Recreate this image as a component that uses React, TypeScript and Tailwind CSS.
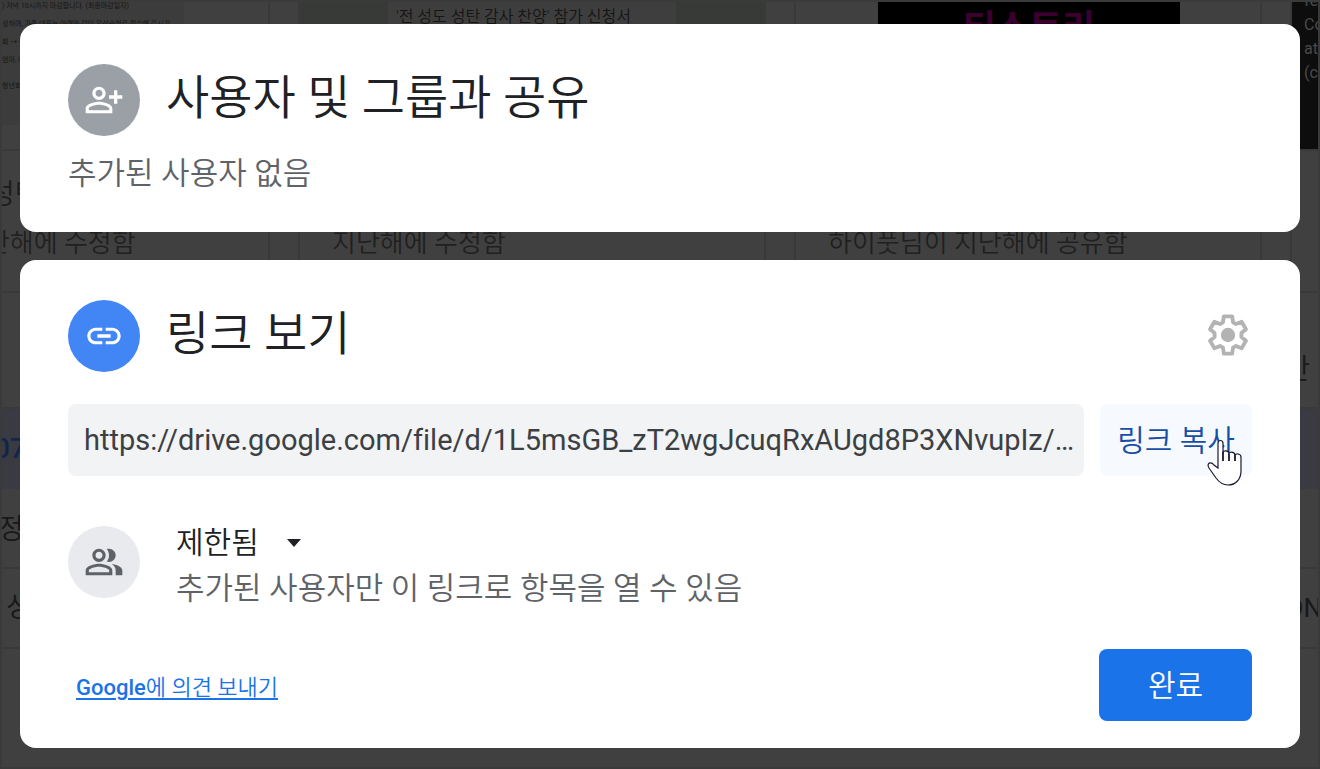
import type { ReactNode } from 'react';

const headPath =
  'M9 5.9c1.16 0 2.1.94 2.1 2.1s-.94 2.1-2.1 2.1S6.9 9.16 6.9 8 7.84 5.9 9 5.9M9 4C6.79 4 5 5.79 5 8s1.79 4 4 4 4-1.79 4-4-1.79-4-4-4z';
const bodyPath =
  'M9 13c-2.67 0-8 1.34-8 4v3h16v-3c0-2.66-5.33-4-8-4zm6.1 5.1H2.9V17c0-.64 3.13-2.1 6.1-2.1s6.1 1.46 6.1 2.1v1.1z';

function PersonAddIcon() {
  return (
    <svg viewBox="0 0 24 24" className="size-10 fill-current" aria-hidden="true">
      <path d={headPath} />
      <path d={bodyPath} />
      <path d="M18 6.2h2v3h3v2h-3v3h-2v-3h-3v-2h3z" />
    </svg>
  );
}

function PeopleIcon() {
  return (
    <svg viewBox="0 0 24 24" className="size-10 fill-current" aria-hidden="true">
      <path d={headPath} />
      <path d={bodyPath} />
      <path d="M15 12c2.21 0 4-1.79 4-4s-1.79-4-4-4c-.47 0-.91.1-1.33.24C14.5 5.27 15 6.58 15 8s-.5 2.73-1.33 3.76c.42.14.86.24 1.33.24z" />
      <path d="M16.67 13.13C18.04 14.06 19 15.32 19 17v3h4v-3c0-2.18-3.57-3.47-6.33-3.87z" />
    </svg>
  );
}

function LinkIcon() {
  return (
    <svg viewBox="0 0 24 24" className="size-10 fill-current" aria-hidden="true">
      <path d="M3.9 12c0-1.71 1.39-3.1 3.1-3.1h4V7H7c-2.76 0-5 2.24-5 5s2.24 5 5 5h4v-1.9H7c-1.71 0-3.1-1.39-3.1-3.1zM8 13h8v-2H8v2zm9-6h-4v1.9h4c1.71 0 3.1 1.39 3.1 3.1s-1.39 3.1-3.1 3.1h-4V17h4c2.76 0 5-2.24 5-5s-2.24-5-5-5z" />
    </svg>
  );
}

function GearIcon() {
  return (
    <svg viewBox="0 1 48 48" className="size-12" aria-hidden="true">
      <path
        d="M19.8 5.3h8.4l.8 6 3 1.8 5.6-2.3 4.4 7.4-4.6 3.7v4.2l4.6 3.7-4.4 7.4-5.6-2.3-3 1.8-.8 6h-8.4l-.8-6-3-1.8-5.6 2.3-4.4-7.4 4.6-3.7v-4.2l-4.6-3.7 4.4-7.4 5.6 2.3 3-1.8z"
        fill="none"
        stroke="currentColor"
        strokeWidth="3.8"
        strokeLinejoin="round"
      />
      <circle cx="24" cy="24" r="7.2" fill="currentColor" />
    </svg>
  );
}

function HandCursor() {
  return (
    <svg
      viewBox="0 0 36 48"
      className="pointer-events-none absolute top-[35px] right-[9px] h-12 w-9"
      aria-hidden="true"
    >
      <path
        d="M11 29V4.500C11 .5 16 .5 16 4.500V14c0-3 6-3 6 1 0-3 6-2.500 6 1.500 0-2.500 6-2 6 1.500V32c0 8-5 14-13 14-6 0-9-3-12-7L2 29c-3-5 2-7 5-3z"
        fill="#fff"
        stroke="#1b1830"
        strokeWidth="1.2"
      />
      <path d="M16 13v9M22 15v7M28 16v6" stroke="#1b1830" strokeWidth="1.8" />
    </svg>
  );
}

function Badge({ tone, children }: { tone: string; children: ReactNode }) {
  return (
    <span className={`flex size-18 shrink-0 items-center justify-center rounded-full ${tone}`}>
      {children}
    </span>
  );
}

function FileCard({ preview, title, note }: { preview: ReactNode; title: string; note: string }) {
  return (
    <article className="flex h-[292px] w-[468px] shrink-0 flex-col border-x-2 border-b-2 border-[#393939]">
      <div className="flow-root h-[150px] overflow-hidden border-b-2 border-[#393939]">{preview}</div>
      <h3 className="pt-6 pl-8 text-[28px] leading-10 text-[#1c1c1c]">{title}</h3>
      <p className="pt-2 pl-8 text-[26px] leading-10 text-[#202020]">{note}</p>
    </article>
  );
}

function DriveBackdrop() {
  return (
    <div
      className="absolute inset-0 overflow-hidden border-2 border-[#3a3a3a] bg-[#404040] font-[350]"
      aria-hidden="true"
    >
      <div className="-mt-px -ml-[200px] flex gap-7">
        <FileCard
          title="2020 전교인 성탄"
          note="하늘가족이 지난해에 수정함"
          preview={
            <div className="h-32 w-[380px] bg-[#3c3c3c] pl-[198px] text-[7px] leading-[18px] font-normal whitespace-nowrap text-[#151515]">
              <p className="-mt-1">) 저녁 10시까지 마감합니다. (최종마감일자)</p>
              <p>성하며, 가족 대표는 아래와 같이 우선순위로 접수해 주시기</p>
              <p>회 → 어린이</p>
              <p>엄마, 아빠</p>
              <p className="pt-2">청년회</p>
            </div>
          }
        />
        <FileCard
          title="성탄 감사 찬양"
          note="지난해에 수정함"
          preview={
            <div className="h-full bg-[#383a37] px-[88px]">
              <p className="h-full bg-[#3e3e3e] pl-2 text-[16px] leading-8 whitespace-nowrap text-[#151515]">
                '전 성도 성탄 감사 찬양' 참가 신청서
              </p>
            </div>
          }
        />
        <FileCard
          title="포스터"
          note="하이풋님이 지난해에 공유함"
          preview={
            <div className="h-full bg-[#404040] pr-20 pl-[82px]">
              <p className="h-full bg-black text-center text-[36px] leading-[56px] font-bold text-[#3c0030]">
                티스토리
              </p>
            </div>
          }
        />
        <FileCard
          title="Code"
          note="지난해에 수정함"
          preview={
            <div className="flow-root h-full bg-[#0d0d0d] pl-3 text-[16px] leading-6 font-normal text-[#4a4a4a]">
              <div className="-mt-3">
                <p>fe</p>
                <p>Co</p>
                <p>at</p>
                <p>(co</p>
              </div>
            </div>
          }
        />
      </div>
      <div className="text-[28px] text-[#181818]">
        <div className="flex h-[116px] items-end justify-end border-b-2 border-[#393939] pr-2 pb-4">
          <span>만</span>
        </div>
        <div className="flex h-20 items-center bg-[#3a3b42] font-medium text-[#10264a]">
          <span className="-ml-2">07</span>
        </div>
        <div className="flex h-20 items-center border-b-2 border-[#393939] pt-1">
          <span className="-ml-1">정</span>
        </div>
        <div className="flex h-20 items-center justify-between border-b-2 border-[#393939] pl-1">
          <span>성</span>
          <span className="-mr-1 text-[26px] font-normal">ON</span>
        </div>
      </div>
    </div>
  );
}

export default function App() {
  return (
    <div className="relative min-h-screen overflow-hidden bg-[#404040] font-['Roboto','Noto_Sans_CJK_KR',sans-serif] text-[#202124]">
      <DriveBackdrop />
      <main className="relative flex flex-col gap-7 px-5 pt-6 pb-5">
        <section className="rounded-2xl bg-white px-12 pt-10 pb-[38px]">
          <header className="flex items-center gap-[26px]">
            <Badge tone="bg-[#9aa0a6] text-white">
              <PersonAddIcon />
            </Badge>
            <h1 className="pb-1 text-[47px] leading-[68px] font-[350]">사용자 및 그룹과 공유</h1>
          </header>
          <p className="pt-[18px] text-[31px] leading-10 font-[350] text-[#5f6368]">추가된 사용자 없음</p>
        </section>

        <section className="rounded-2xl bg-white px-12 pt-10 pb-[27px]">
          <header className="flex items-center gap-[26px]">
            <Badge tone="bg-[#4285f4] text-white">
              <LinkIcon />
            </Badge>
            <h2 className="grow pb-1 text-[47px] leading-[68px] font-[350]">링크 보기</h2>
            <button type="button" aria-label="설정" className="text-[#b3b3b3]">
              <GearIcon />
            </button>
          </header>

          <div className="flex gap-4 pt-8">
            <input
              type="text"
              readOnly
              aria-label="링크"
              value="https://drive.google.com/file/d/1L5msGB_zT2wgJcuqRxAUgd8P3XNvupIz/…"
              className="h-18 min-w-0 grow truncate rounded-lg bg-[#f1f3f4] pr-2 pl-4 text-[29px] text-[#3c4043] outline-none [font-variant-ligatures:none]"
            />
            <button
              type="button"
              className="relative h-18 w-38 shrink-0 rounded-lg bg-[#f6fafe] text-[30px] font-[350] text-[#174ea6]"
            >
              링크 복사
              <HandCursor />
            </button>
          </div>

          <div className="flex items-center gap-9 pt-9">
            <Badge tone="bg-[#e8eaed] text-[#5f6368]">
              <PeopleIcon />
            </Badge>
            <div className="grow pt-2">
              <div className="flex items-center">
                <select
                  aria-label="링크 액세스 권한"
                  className="appearance-none bg-transparent text-[30px] leading-[46px] font-[350] outline-none"
                >
                  <option>제한됨</option>
                </select>
                <svg viewBox="0 0 14 8" className="ml-7 h-2 w-3.5 fill-current" aria-hidden="true">
                  <path d="M0 0h14L7 8z" />
                </svg>
              </div>
              <p className="text-[31px] leading-[46px] font-[350] text-[#5f6368]">
                추가된 사용자만 이 링크로 항목을 열 수 있음
              </p>
            </div>
          </div>

          <footer className="flex items-center justify-between pt-[37px] pl-2">
            <a
              href="#feedback"
              className="pt-1 text-[22px] font-[350] text-[#1a73e8] underline decoration-2 underline-offset-3"
            >
              <span className="font-medium">Google</span>에 의견 보내기
            </a>
            <button
              type="button"
              className="h-18 w-[153px] rounded-lg bg-[#1a73e8] text-[30px] font-[350] text-white"
            >
              완료
            </button>
          </footer>
        </section>
      </main>
    </div>
  );
}
